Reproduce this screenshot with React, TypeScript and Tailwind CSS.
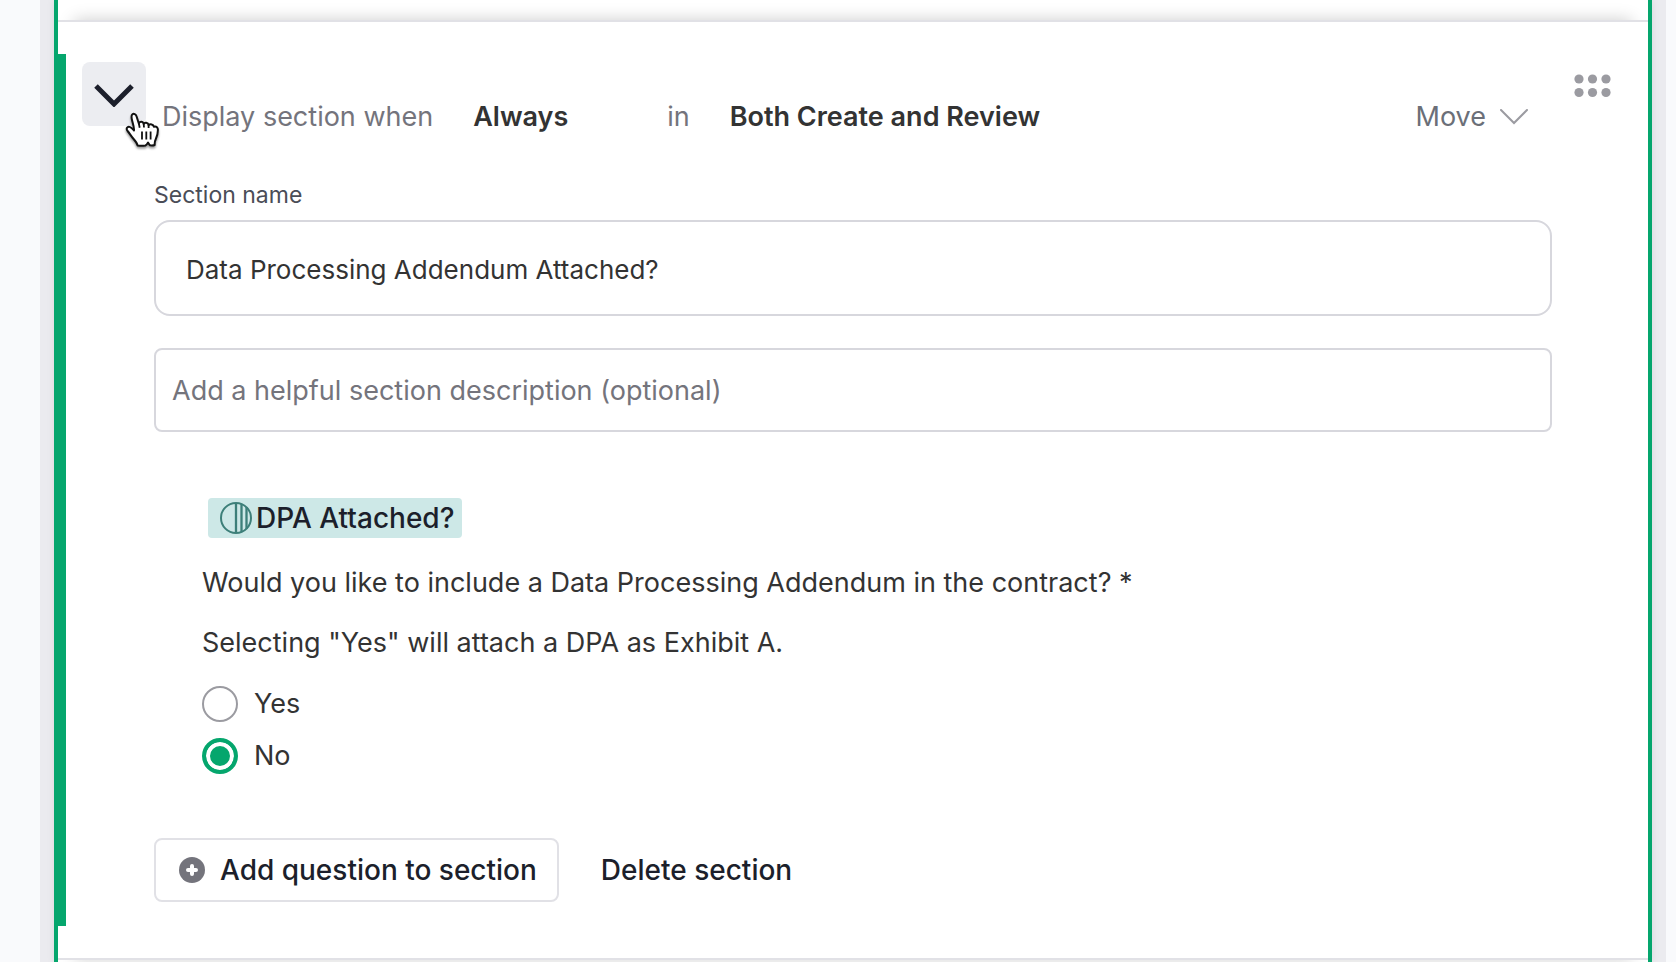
import { useState } from 'react'

const whenOptions = ['Always', 'Never']
const stageOptions = ['Both Create and Review', 'Create', 'Review']

function HandCursor() {
  return (
    <svg viewBox="0 0 34 38" className="pointer-events-none absolute left-[43px] top-[49px] h-[38px] w-[34px] drop-shadow-[0_2px_1px_rgba(0,0,0,0.4)]">
      <path
        d="M12.600 34.500c-.5-2.400-2-4.200-4-6.500C6 25 4.800 22.600 2.600 20c-2-2.500-.2-4.700 2-4.100 1.700.5 3 2 4.400 3.600.3-2.500-.7-5.700-1.700-9.200C6.500 7.500 6 4.700 7.300 3.400c1.500-1.300 3.500-.3 4.200 1.900l2.400 7.400c.3-2.200 3.900-3 4.800.3.800-2 4.400-1.700 4.900 1.100 1.500-1.400 4.700-.8 5.300 1.700 2.700-.8 4.100.9 4 3.200-.1 4.700-.9 6.600-2 8.700-.9 1.800-1.400 3.500-1.200 6.300-1.600.6-3.300.5-4.700.3-.9-.8-1.500-2-2-2.800-.8 1.300-1.500 2.500-2.600 3-2.600.5-5.200.4-7.800 0z"
        fill="#fff"
        stroke="#111"
        strokeWidth="2"
        strokeLinejoin="round"
      />
      <path d="M17 20.500v8M21.300 20.500v8M25.600 20.500v8M13.900 12.700l.8 4M18.700 13l.3 3.500M23.600 14.100v3" stroke="#111" strokeWidth="1.800" fill="none" />
    </svg>
  )
}

function TagIcon() {
  return (
    <svg viewBox="0 0 32 32" className="h-8 w-8 shrink-0" fill="none" stroke="#3d7f79" strokeWidth="2">
      <circle cx="16" cy="16" r="15" />
      <path d="M16 1v30M21.500 2v28M26.500 5v22" strokeWidth="2.300" />
    </svg>
  )
}

export default function App() {
  const [name, setName] = useState('Data Processing Addendum Attached?')
  const [description, setDescription] = useState('')
  const [answer, setAnswer] = useState('No')

  return (
    <div className="min-h-screen overflow-hidden bg-[#f9fafc] pl-10 pr-[10px] font-['Inter',sans-serif] text-[27px] leading-10 text-[#333]">
      <div className="bg-[#ebebef] px-[14px]">
        <main className="min-h-screen overflow-hidden border-x-4 border-[#05a66d] bg-white pt-5 shadow-[0_0_8px_rgba(0,0,0,0.08)]">
          <section className="flex border-y-2 border-[#e1e1e6] bg-white py-8 shadow-[0_-16px_16px_-16px_rgba(0,0,0,0.2),0_20px_16px_-16px_rgba(0,0,0,0.12)]">
            <div className="w-2 shrink-0 bg-[#05a66d]" />
            <div className="min-w-0 flex-1">
              <header className="flex items-start pl-4 pr-[37px] pt-2">
                <div className="relative shrink-0">
                  <button aria-label="Collapse section" className="flex h-16 w-16 items-center justify-center rounded-lg bg-[#ecedf1]">
                    <svg viewBox="0 0 40 26" className="h-[26px] w-10" fill="none" stroke="#1c1f2b" strokeWidth="5">
                      <path d="M2 5l18 18L38 5" />
                    </svg>
                  </button>
                  <HandCursor />
                </div>
                <div className="flex flex-1 items-center pl-4 pt-[35px]">
                  <label htmlFor="when" className="text-[#74747c]">Display section when</label>
                  <select id="when" className="ml-10 w-[194px] appearance-none bg-transparent font-semibold">
                    {whenOptions.map(o => <option key={o}>{o}</option>)}
                  </select>
                  <label htmlFor="stage" className="text-[#74747c]">in</label>
                  <select id="stage" className="ml-10 appearance-none bg-transparent font-semibold">
                    {stageOptions.map(o => <option key={o}>{o}</option>)}
                  </select>
                  <button className="ml-auto flex items-center gap-[14px] text-[#6b6f78]">
                    Move
                    <svg viewBox="0 0 28 16" className="h-4 w-7" fill="none" stroke="#9b9ba1" strokeWidth="2" strokeLinecap="round">
                      <path d="M1 1l13 13L27 1" />
                    </svg>
                  </button>
                </div>
                <button aria-label="Drag section" className="ml-[46px] mt-3">
                  <svg viewBox="0 0 37 24" className="h-6 w-[37px]" fill="#9b9ba1">
                    {[5, 18.5, 32].map(x => [5, 18.5].map(y => <circle key={`${x}-${y}`} cx={x} cy={y} r="4.600" />))}
                  </svg>
                </button>
              </header>

              <div className="pl-[88px] pr-24 pt-[42px]">
                <label htmlFor="name" className="block text-[23px] leading-8 text-[#4a4d57]">Section name</label>
                <input
                  id="name"
                  value={name}
                  onChange={e => setName(e.target.value)}
                  className="mt-[9px] block h-24 w-full rounded-2xl border-2 border-[#d7d7dd] px-[30px] pt-[2px] text-[26px]"
                />
                <input
                  aria-label="Section description"
                  placeholder="Add a helpful section description (optional)"
                  value={description}
                  onChange={e => setDescription(e.target.value)}
                  className="mt-8 block h-[84px] w-full rounded-lg border-2 border-[#d7d7dd] px-4 placeholder:text-[#74747c]"
                />

                <div role="radiogroup" aria-labelledby="question" className="mt-[66px] pl-12">
                  <div className="ml-[6px] flex w-fit items-center gap-1 rounded bg-[#cde8e7] pl-3 pr-2 text-[28px] font-medium text-[#1c1f2b]">
                    <TagIcon />
                    DPA Attached?
                  </div>
                  <p id="question" className="mt-[25px]">Would you like to include a Data Processing Addendum in the contract? *</p>
                  <p className="mt-5">Selecting "Yes" will attach a DPA as Exhibit A.</p>
                  <div className="mt-[21px] flex flex-col gap-3">
                    {['Yes', 'No'].map(o => (
                      <label key={o} className="flex w-fit items-center gap-4">
                        <input
                          type="radio"
                          name="answer"
                          checked={answer === o}
                          onChange={() => setAnswer(o)}
                          className="h-9 w-9 appearance-none rounded-full border-2 border-[#9b9ba1] checked:border-4 checked:border-[#05a66d] checked:bg-[#05a66d] checked:shadow-[inset_0_0_0_4px_#fff]"
                        />
                        {o}
                      </label>
                    ))}
                  </div>
                </div>

                <div className="mb-6 mt-[62px] flex items-center gap-[42px] text-[28px] font-medium text-[#1c1f2b]">
                  <button className="flex h-16 items-center gap-[15px] rounded-lg border-2 border-[#e1e1e6] pl-[23px] pr-5">
                    <svg viewBox="0 0 26 26" className="h-[26px] w-[26px]">
                      <circle cx="13" cy="13" r="13" fill="#74747c" />
                      <path d="M13 9v8M9 13h8" stroke="#fff" strokeWidth="4" strokeLinecap="round" />
                    </svg>
                    Add question to section
                  </button>
                  <button>Delete section</button>
                </div>
              </div>
            </div>
          </section>
        </main>
      </div>
    </div>
  )
}
